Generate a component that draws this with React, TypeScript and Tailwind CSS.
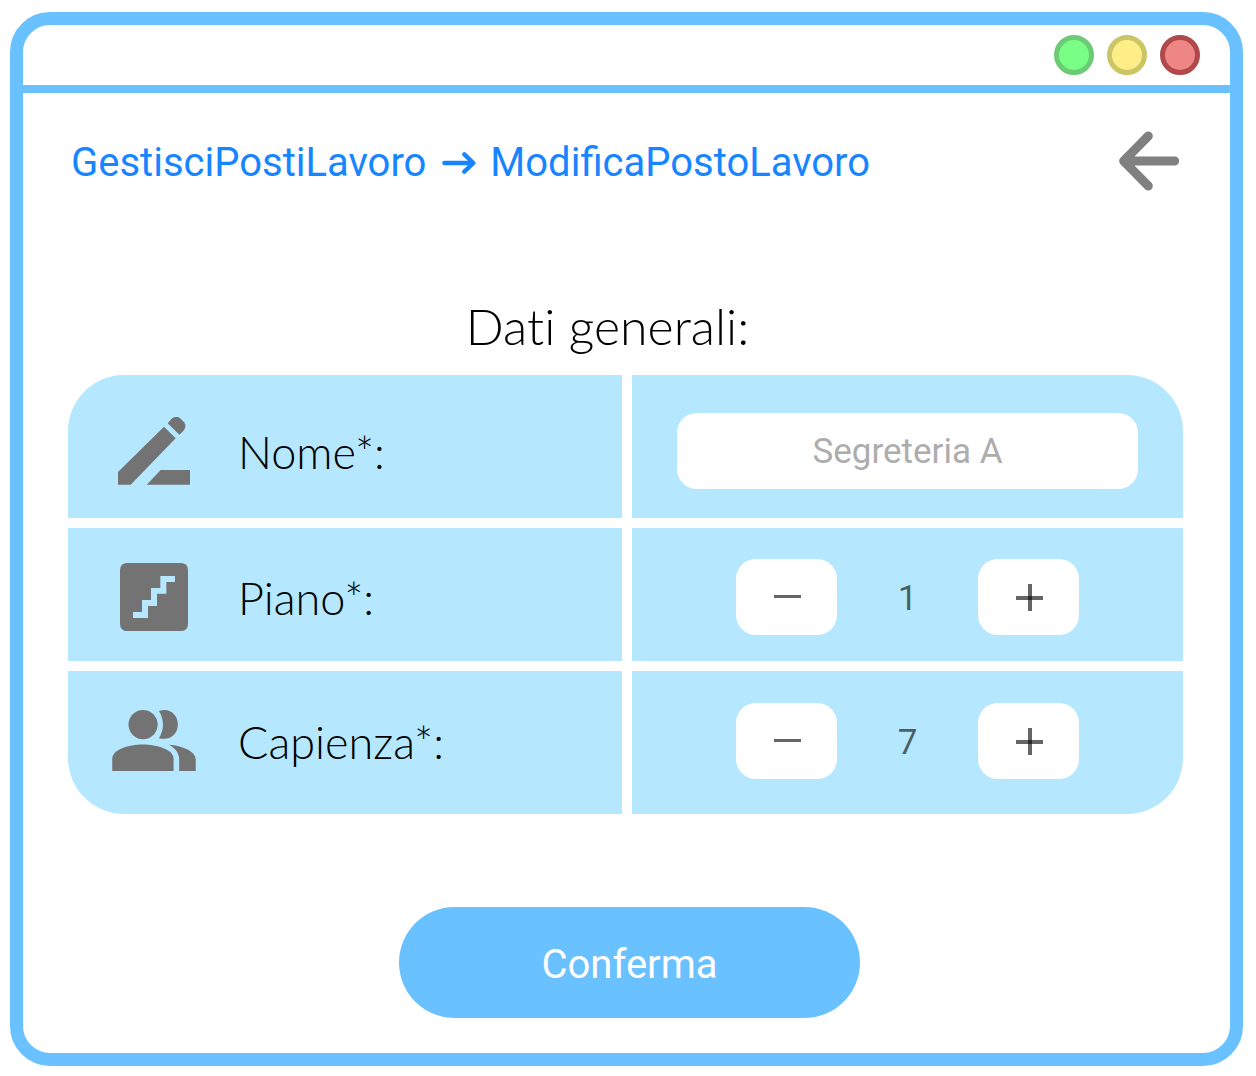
import { useState, type ReactNode } from "react";

function RenameIcon() {
  return (
    <svg viewBox="0 0 216 204" className="h-[68px] w-[72px]" fill="currentColor" aria-hidden="true">
      <path d="M0 165 L138 29 L173 64 L38 203 H0 Z" />
      <path d="M149 19 L157 10 C166 -3 180 -3 188 5 L197 14 C205 23 204 34 193 45 L184 53 Z" />
      <path d="M86 203 L128 159 H216 V203 Z" />
    </svg>
  );
}

function StairsIcon() {
  return (
    <svg viewBox="0 0 204 204" className="size-[68px]" fill="currentColor" aria-hidden="true">
      <path
        fillRule="evenodd"
        d="M22 0 H182 Q204 0 204 22 V182 Q204 204 182 204 H22 Q0 204 0 182 V22 Q0 0 22 0 Z M39 165 H84 V129 H111 V92 H139 V57 H165 V39 H121 V75 H93 V111 H66 V147 H39 Z"
      />
    </svg>
  );
}

function PeopleIcon() {
  return (
    <svg viewBox="0 0 252 184" className="h-[61px] w-[84px]" fill="currentColor" aria-hidden="true">
      <circle cx="93" cy="44" r="44" />
      <path d="M141 3 C176 -8 198 17 198 44 C198 72 176 94 141 85 C157 59 157 29 141 3 Z" />
      <path d="M0 184 V147 C0 119 50 104 92 104 C134 104 185 119 185 147 V184 Z" />
      <path d="M172 105 C210 108 252 124 252 150 V184 H202 V150 C202 130 190 116 172 105 Z" />
    </svg>
  );
}

function Stepper({ id, value, onChange }: { id: string; value: number; onChange: (n: number) => void }) {
  const button =
    "flex h-[76px] w-[101px] items-center justify-center rounded-[20px] bg-white text-black/60";
  return (
    <div className="flex items-center justify-center gap-10">
      <button type="button" aria-label="Diminuisci" className={button} onClick={() => onChange(value - 1)}>
        <svg viewBox="0 0 28 28" className="size-7" fill="currentColor" aria-hidden="true">
          <rect x="1" y="12" width="27" height="3" />
        </svg>
      </button>
      <output id={id} className="w-[61px] pt-1 text-center text-[35px] leading-10 text-black/60">
        {value}
      </output>
      <button type="button" aria-label="Aumenta" className={button} onClick={() => onChange(value + 1)}>
        <svg viewBox="0 0 28 28" className="size-7" fill="currentColor" aria-hidden="true">
          <rect x="1" y="13" width="27" height="4" />
          <rect x="13" y="1" width="4" height="27" />
        </svg>
      </button>
    </div>
  );
}

function FieldRow({ id, icon, label, pad, children }: { id: string; icon: ReactNode; label: string; pad: string; children: ReactNode }) {
  return (
    <>
      <div className={`flex items-center gap-8 bg-[#b5e8ff] pl-10 text-[#737373] ${pad}`}>
        <span className="flex w-[92px] shrink-0 justify-center">{icon}</span>
        <label htmlFor={id} className="pt-1 pl-1.5 font-[Lato] text-[45px] leading-none font-light text-black">
          {label}
        </label>
      </div>
      <div className={`flex items-center justify-center bg-[#b5e8ff] px-[45px] ${pad}`}>{children}</div>
    </>
  );
}

export default function App() {
  const [name, setName] = useState("Segreteria A");
  const [floor, setFloor] = useState(1);
  const [capacity, setCapacity] = useState(7);

  return (
    <div className="flex min-h-screen flex-col bg-white pt-3 pr-[13px] pb-[10px] pl-[10px] font-[Roboto,sans-serif]">
      <div className="flex grow flex-col rounded-[40px] border-[13px] border-[#69c1ff]">
        <header className="flex h-[68px] items-center justify-end gap-[13px] border-b-8 border-[#69c1ff] pr-[30px]">
          <button type="button" aria-label="Riduci" className="size-10 rounded-full border-[5px] border-[#6dcb76] bg-[#7aff86]" />
          <button type="button" aria-label="Ingrandisci" className="size-10 rounded-full border-[5px] border-[#ccc566] bg-[#ffee88]" />
          <button type="button" aria-label="Chiudi" className="size-10 rounded-full border-[5px] border-[#b04a4a] bg-[#ef8686]" />
        </header>

        <main className="flex flex-col pr-[47px] pl-[45px]">
          <div className="flex items-center justify-between pt-9 pr-1 pl-[3px]">
            <nav aria-label="Percorso" className="flex items-center pt-1 text-[40px] leading-[60px] text-[#1785ff]">
              <a href="#gestisci">GestisciPostiLavoro</a>
              <svg viewBox="0 0 102 66" className="mr-[14px] ml-4 h-[22px] w-[34px]" fill="none" stroke="currentColor" strokeWidth="13" strokeLinecap="round" strokeLinejoin="round" aria-hidden="true">
                <path d="M7 33 H93 M67 7 L94 33 L67 59" />
              </svg>
              <a href="#modifica" aria-current="page">ModificaPostoLavoro</a>
            </nav>
            <button type="button" aria-label="Indietro" className="text-[#808080]">
              <svg viewBox="0 0 180 180" className="size-[60px]" fill="none" stroke="currentColor" strokeWidth="27" strokeLinecap="round" strokeLinejoin="round" aria-hidden="true">
                <path d="M167 90 H14 M88 15 L14 90 L88 165" />
              </svg>
            </button>
          </div>

          <form onSubmit={(e) => e.preventDefault()}>
            <h1 className="mt-[100px] mb-4 pr-9 text-center font-[Lato] text-[50px] leading-[66px] font-light text-black [font-variant-ligatures:none]">
              Dati generali:
            </h1>
            <div className="grid grid-cols-[554fr_551fr] grid-rows-[143px_133px_143px] gap-[10px] overflow-hidden rounded-[56px]">
              <FieldRow id="nome" icon={<RenameIcon />} label="Nome*:" pad="pt-2">
                <input
                  id="nome"
                  type="text"
                  value={name}
                  onChange={(e) => setName(e.target.value)}
                  className="h-[76px] w-full min-w-0 rounded-[20px] bg-white pt-0.5 text-center text-[35px] text-[#adadad]"
                />
              </FieldRow>
              <FieldRow id="piano" icon={<StairsIcon />} label="Piano*:" pad="pt-1">
                <Stepper id="piano" value={floor} onChange={setFloor} />
              </FieldRow>
              <FieldRow id="capienza" icon={<PeopleIcon />} label="Capienza*:" pad="pb-1">
                <Stepper id="capienza" value={capacity} onChange={setCapacity} />
              </FieldRow>
            </div>

            <div className="flex justify-center pt-[93px] pb-[35px] pl-2">
              <button type="submit" className="h-[111px] w-[461px] rounded-full bg-[#69c1ff] pt-1 text-[40px] text-white">
                Conferma
              </button>
            </div>
          </form>
        </main>
      </div>
    </div>
  );
}
